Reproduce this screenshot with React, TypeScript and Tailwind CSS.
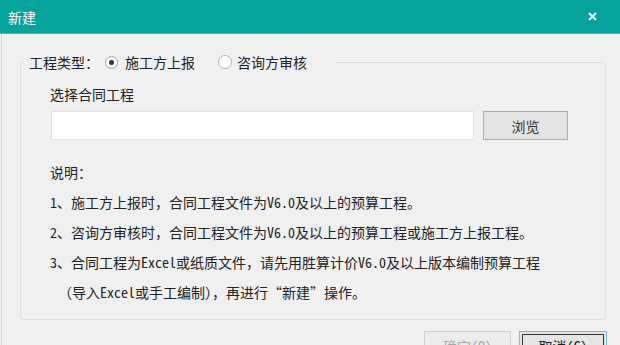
export default function App() {
  return (
    <div className="w-[620px] h-[345px] overflow-hidden bg-[#f0f0f0] font-[family-name:'Noto_Sans_Mono_CJK_SC','Noto_Sans_CJK_SC',sans-serif] text-[14px] text-[#222]">
      <div className="h-[34px] bg-[#05a39a] flex items-center justify-between pl-[8px] pr-[23px] text-white border-b border-[#3fb8b0]">
        <span className="leading-[20px]">新建</span>
        <svg width="9" height="9" viewBox="0 0 9 9">
          <path d="M1 1 L8 8 M8 1 L1 8" stroke="#ffffff" strokeWidth="2" />
        </svg>
      </div>
      <div className="ml-[1px] border-l border-[#d6d6d6] h-[311px] pt-[18px] pl-[18px] pr-[14px]">
        <fieldset className="border border-[#d8e0e6] rounded-[3px] pl-[29px] pr-[37px] pb-[12px]">
          <legend className="ml-[-26px] pl-[5px] pr-[28px] leading-[20px] flex items-center">
            <span>工程类型：</span>
            <span className="ml-[6px] w-[13px] h-[13px] rounded-full border border-[#a3a3a3] bg-white flex items-center justify-center">
              <span className="w-[5px] h-[5px] rounded-full bg-[#333]" />
            </span>
            <span className="ml-[7px]">施工方上报</span>
            <span className="ml-[23px] w-[14px] h-[14px] rounded-full border border-[#b3b3b3] bg-white" />
            <span className="ml-[5px]">咨询方审核</span>
          </legend>
          <div className="mt-[12px] leading-[20px]">选择合同工程</div>
          <div className="mt-[7px] flex gap-[9px] pl-[1px]">
            <div className="w-[423px] h-[29px] bg-white border border-[#e2e2e2]" />
            <button className="w-[85px] h-[29px] border border-[#adadad] bg-[#e3e3e3] text-[#333] leading-[20px]">
              浏览
            </button>
          </div>
          <div className="mt-[17px] leading-[30px]">
            <div>说明：</div>
            <div>1、施工方上报时，合同工程文件为V6.0及以上的预算工程。</div>
            <div>2、咨询方审核时，合同工程文件为V6.0及以上的预算工程或施工方上报工程。</div>
            <div>3、合同工程为Excel或纸质文件，请先用胜算计价V6.0及以上版本编制预算工程</div>
            <div className="pl-[8px]">（导入Excel或手工编制），再进行“新建”操作。</div>
          </div>
        </fieldset>
        <div className="flex justify-end gap-[8px] mt-[11px] mr-[-1px]">
          <button className="w-[87px] h-[30px] border border-[#cfcfcf] bg-[#ececec] text-[#a8a8a8] leading-[28px]">
            确定(O)
          </button>
          <button className="w-[88px] h-[30px] border border-[#7fb5e8] bg-[#e5e5e5] p-[2px]">
            <div className="w-full h-full border border-[#333] leading-[22px] text-[#222]">取消(C)</div>
          </button>
        </div>
      </div>
    </div>
  );
}
